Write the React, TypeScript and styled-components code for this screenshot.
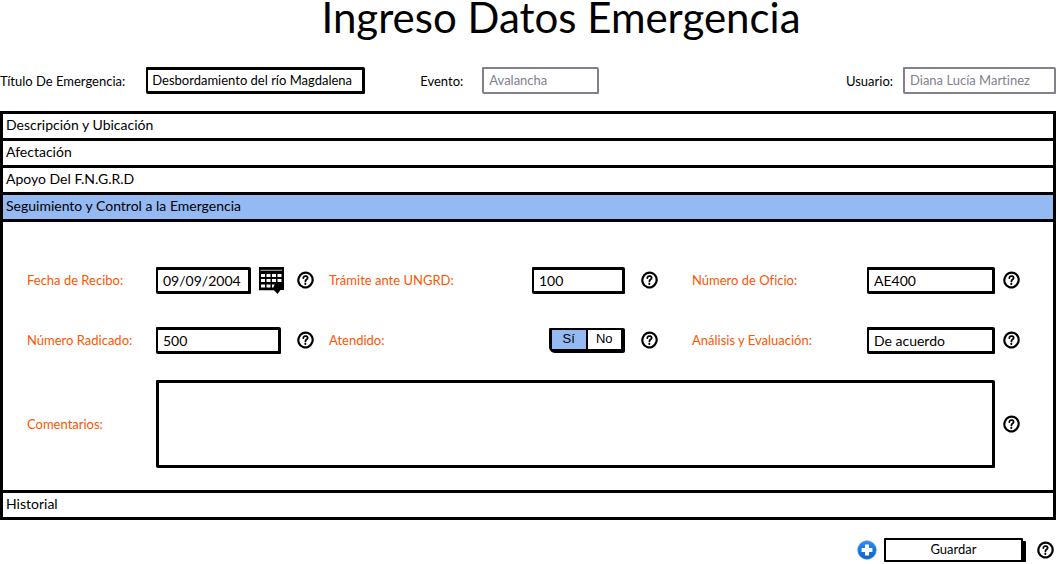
import React, { useState } from "react";
import styled, { createGlobalStyle } from "styled-components";

const INK = "#000000";
const MUTED = "#82808c";
const ACCENT = "#ff5500";
const SELECTED = "#95b9f3";

const GlobalStyle = createGlobalStyle`
  *, *::before, *::after { box-sizing: border-box; }
  body {
    margin: 0;
    background: #ffffff;
    color: ${INK};
    font-family: Lato, "Liberation Sans", sans-serif;
    font-size: 13px;
    line-height: 18px;
    font-variant-ligatures: none;
  }
  button, input, textarea { font: inherit; color: inherit; margin: 0; }
`;

const Page = styled.main`
  display: flex;
  flex-direction: column;
`;

const Title = styled.h1`
  margin: 0 0 33px;
  padding-left: 66px;
  font-size: 42px;
  line-height: 34px;
  font-weight: 400;
  text-align: center;
`;

const Summary = styled.div`
  display: flex;
  align-items: center;
  margin-bottom: 17px;
`;

const SummaryField = styled.div<{ $gap: number; $push?: boolean }>`
  display: flex;
  align-items: center;
  gap: ${(p) => p.$gap}px;
  margin-left: ${(p) => (p.$push ? "auto" : "0")};
  & + & { padding-left: 55px; }
`;

const TextInput = styled.input<{ $width?: number }>`
  width: ${(p) => (p.$width ? `${p.$width}px` : "100%")};
  min-width: 0;
  height: 27px;
  padding: 0 4px 2px;
  border: 3px solid ${INK};
  border-left-width: 2px;
  border-radius: 1px 2px 1px 2px;
  background: #ffffff;
  font-variant-ligatures: none;
  outline: none;
  &:disabled {
    border: 2px solid ${MUTED};
    color: ${MUTED};
    padding: 0 5px 2px;
    opacity: 1;
  }
`;

const FormInput = styled(TextInput)`
  padding: 0 5px;
  font-size: 14px;
`;

const Accordion = styled.div`
  display: flex;
  flex-direction: column;
  border: 3px solid ${INK};
  border-top: 0;
  margin-bottom: 18px;
`;

const SectionHeading = styled.h2`
  margin: 0;
  font-size: 14px;
  font-weight: 400;
`;

const SectionButton = styled.button<{ $open: boolean }>`
  display: block;
  width: 100%;
  height: 27px;
  padding: 0 3px 2px;
  border: 0;
  border-top: 3px solid ${INK};
  background: ${(p) => (p.$open ? SELECTED : "#ffffff")};
  text-align: left;
  cursor: pointer;
`;

const Panel = styled.form`
  display: grid;
  grid-template-columns:
    129fr 141fr 32px
    203fr 109fr 51px
    175fr 136fr 17px;
  grid-template-rows: 60px 60px 108px;
  align-items: center;
  padding: 28px 33px 12px 24px;
  border-top: 3px solid ${INK};
`;

const FieldLabel = styled.label`
  color: ${ACCENT};
  white-space: nowrap;
`;

const LegendLabel = styled.span`
  color: ${ACCENT};
`;

const Control = styled.div<{ $inset?: number; $wide?: boolean }>`
  display: flex;
  align-items: center;
  justify-content: flex-end;
  gap: 8px;
  padding-right: ${(p) => p.$inset ?? 16}px;
  grid-column: ${(p) => (p.$wide ? "span 7" : "auto")};
`;

const Comments = styled.textarea`
  display: block;
  width: 100%;
  height: 88px;
  padding: 4px;
  border: 3px solid ${INK};
  border-radius: 1px 2px 1px 2px;
  background: #ffffff;
  resize: none;
  outline: none;
`;

const IconButton = styled.button`
  display: flex;
  flex: none;
  padding: 0;
  border: 0;
  background: none;
  cursor: pointer;
`;

const Toggle = styled.div`
  display: flex;
  width: 76px;
  height: 25px;
  border: 2px solid ${INK};
  border-width: 2px 4px 4px 3px;
  border-radius: 1px 2px 2px 6px;
  font-family: "Liberation Sans", Arial, sans-serif;
`;

const ToggleOption = styled.label`
  flex: 1;
  display: flex;
  align-items: center;
  justify-content: center;
  cursor: pointer;
  & + & { border-left: 2px solid ${INK}; }
  &:has(input:checked) { background: ${SELECTED}; }
`;

const HiddenRadio = styled.input`
  appearance: none;
  width: 0;
  height: 0;
`;

const Actions = styled.footer`
  display: flex;
  align-items: center;
  justify-content: flex-end;
  padding-right: 2px;
`;

const SaveButton = styled.button`
  width: 139px;
  height: 24px;
  margin: 0 14px 0 7px;
  padding: 0 0 2px;
  border: 2px solid ${INK};
  border-radius: 1px;
  background: #ffffff;
  box-shadow: 3px 3px 0 ${INK};
  cursor: pointer;
`;

function HelpButton({ topic }: { topic: string }) {
  return (
    <IconButton type="button" aria-label={`Ayuda: ${topic}`}>
      <svg width="17" height="18" viewBox="0 0 17 18" fill="none" stroke={INK} strokeLinecap="round">
        <ellipse cx="8.5" cy="9" rx="7.1" ry="7.5" strokeWidth="2.2" transform="rotate(20 8.5 9)" />
        <path d="M6.3 7.2C6.5 5.3 8 4.8 9.3 5.2C11 5.8 11 7.5 9.8 8.3C8.9 8.9 8.4 9.2 8.4 10.4" strokeWidth="1.8" />
        <path d="M8.3 12.7V12.9" strokeWidth="2" />
      </svg>
    </IconButton>
  );
}

function CalendarIcon() {
  return (
    <svg width="25" height="27" viewBox="0 0 25 27">
      <path d="M0 0H25V23H21.5L18.5 27L15 23.3H0Z" fill={INK} />
      <path d="M1.5 3.3H23" stroke="#b5b5b5" strokeWidth="1" />
      <g fill="#ffffff">
        <path d="M2 7h4v3H2zM7.5 7h4v3h-4zM13 7h4v3h-4zM18.5 7h4v3h-4z" />
        <path d="M2 12h4v3H2zM7.5 12h4v3h-4zM13 12h4v3h-4zM18.5 12h4v3h-4z" />
        <path d="M2 17.5h4v3H2zM7.5 17.5h4v3h-4zM13 17.5h2.6l-1.2 3H13z" />
      </g>
    </svg>
  );
}

function AddIcon() {
  return (
    <svg width="20" height="20" viewBox="0 0 20 20">
      <defs>
        <linearGradient id="add-fill" x1="0" y1="0" x2="0" y2="1">
          <stop offset="0" stopColor="#2f8df0" />
          <stop offset="0.5" stopColor="#1a75e0" />
          <stop offset="1" stopColor="#1261c6" />
        </linearGradient>
      </defs>
      <circle cx="10" cy="10" r="9.3" fill="url(#add-fill)" stroke="#4d94dd" strokeWidth="0.6" />
      <path d="M8 4.6h4V8h3.4v4H12v3.4H8V12H4.6V8H8z" fill="#ffffff" />
    </svg>
  );
}

function FollowUpForm() {
  return (
    <Panel>
      <FieldLabel htmlFor="fecha">Fecha de Recibo:</FieldLabel>
      <Control $inset={13}>
        <FormInput id="fecha" defaultValue="09/09/2004" />
        <IconButton type="button" aria-label="Abrir calendario"><CalendarIcon /></IconButton>
      </Control>
      <HelpButton topic="Fecha de Recibo" />
      <FieldLabel htmlFor="tramite">Trámite ante UNGRD:</FieldLabel>
      <Control><FormInput id="tramite" defaultValue="100" /></Control>
      <HelpButton topic="Trámite ante UNGRD" />
      <FieldLabel htmlFor="oficio">Número de Oficio:</FieldLabel>
      <Control $inset={8}><FormInput id="oficio" defaultValue="AE400" /></Control>
      <HelpButton topic="Número de Oficio" />

      <FieldLabel htmlFor="radicado">Número Radicado:</FieldLabel>
      <Control><FormInput id="radicado" defaultValue="500" /></Control>
      <HelpButton topic="Número Radicado" />
      <LegendLabel id="atendido">Atendido:</LegendLabel>
      <Control>
        <Toggle role="radiogroup" aria-labelledby="atendido">
          <ToggleOption><HiddenRadio type="radio" name="atendido" defaultChecked />Sí</ToggleOption>
          <ToggleOption><HiddenRadio type="radio" name="atendido" />No</ToggleOption>
        </Toggle>
      </Control>
      <HelpButton topic="Atendido" />
      <FieldLabel htmlFor="analisis">Análisis y Evaluación:</FieldLabel>
      <Control $inset={8}><FormInput id="analisis" defaultValue="De acuerdo" /></Control>
      <HelpButton topic="Análisis y Evaluación" />

      <FieldLabel htmlFor="comentarios">Comentarios:</FieldLabel>
      <Control $wide $inset={8}><Comments id="comentarios" /></Control>
      <HelpButton topic="Comentarios" />
    </Panel>
  );
}

const sections = [
  "Descripción y Ubicación",
  "Afectación",
  "Apoyo Del F.N.G.R.D",
  "Seguimiento y Control a la Emergencia",
  "Historial",
];

export default function App() {
  const [open, setOpen] = useState(3);
  return (
    <>
      <GlobalStyle />
      <Page>
        <Title>Ingreso Datos Emergencia</Title>
        <Summary>
          <SummaryField $gap={21}>
            <label htmlFor="titulo">Título De Emergencia:</label>
            <TextInput id="titulo" $width={219} defaultValue="Desbordamiento del río Magdalena" />
          </SummaryField>
          <SummaryField $gap={19}>
            <label htmlFor="evento">Evento:</label>
            <TextInput id="evento" $width={117} defaultValue="Avalancha" disabled />
          </SummaryField>
          <SummaryField $gap={10} $push>
            <label htmlFor="usuario">Usuario:</label>
            <TextInput id="usuario" $width={153} defaultValue="Diana Lucía Martinez" disabled />
          </SummaryField>
        </Summary>
        <Accordion>
          {sections.map((name, i) => (
            <React.Fragment key={name}>
              <SectionHeading>
                <SectionButton $open={open === i} aria-expanded={open === i} onClick={() => setOpen(i)}>
                  {name}
                </SectionButton>
              </SectionHeading>
              {i === 3 && open === 3 && <FollowUpForm />}
            </React.Fragment>
          ))}
        </Accordion>
        <Actions>
          <IconButton type="button" aria-label="Agregar"><AddIcon /></IconButton>
          <SaveButton type="button">Guardar</SaveButton>
          <HelpButton topic="Guardar" />
        </Actions>
      </Page>
    </>
  );
}
